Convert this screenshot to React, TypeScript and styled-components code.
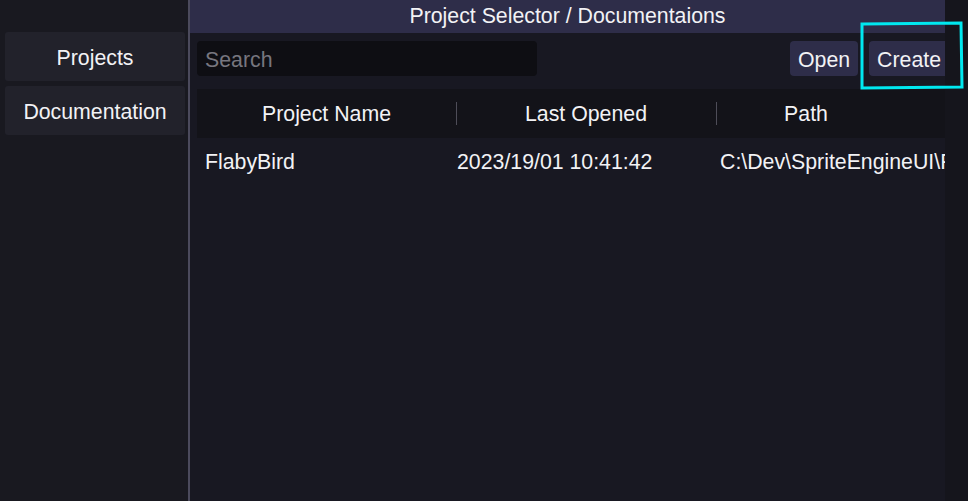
import styled, { createGlobalStyle } from 'styled-components';

const Global = createGlobalStyle`
  html, body {
    margin: 0;
    padding: 0;
    background: #15151c;
  }
  body {
    font-family: "Liberation Sans", Arial, sans-serif;
    color: #f2f2f5;
  }
`;

const Shell = styled.div`
  position: relative;
  display: flex;
  width: 968px;
  height: 501px;
  overflow: hidden;
  background: #15151c;
`;

const Sidebar = styled.nav`
  width: 190px;
  flex-shrink: 0;
  box-sizing: border-box;
  padding: 32px 0 0 5px;
  display: flex;
  flex-direction: column;
  gap: 5px;
  background: #191920;
  border-right: 2px solid #4b4a5c;
`;

const NavButton = styled.button`
  height: 49px;
  width: 180px;
  padding: 3px 0 0;
  border: none;
  border-radius: 3px;
  background: #22222b;
  color: #f2f2f5;
  font-family: inherit;
  font-size: 21.3px;
  cursor: pointer;
`;

const Panel = styled.main`
  width: 755px;
  flex-shrink: 0;
  display: flex;
  flex-direction: column;
  background: #181822;
  overflow: hidden;
`;

const TitleBar = styled.header`
  height: 33px;
  display: flex;
  align-items: center;
  justify-content: center;
  background: #2e2d49;
  font-size: 21.3px;
`;

const Body = styled.div`
  padding: 8px 0 0 7px;
  display: flex;
  flex-direction: column;
`;

const Toolbar = styled.div`
  height: 35px;
  display: flex;
  align-items: stretch;
  justify-content: space-between;
`;

const Search = styled.input`
  width: 340px;
  box-sizing: border-box;
  padding: 4px 8px 0;
  border: none;
  border-radius: 4px;
  background: #0e0e13;
  color: #f2f2f5;
  font-family: inherit;
  font-size: 21.3px;
  outline: none;

  &::placeholder {
    color: #77767f;
  }
`;

const Actions = styled.div`
  display: flex;
  gap: 11px;
  margin-right: -4px;
`;

const ActionButton = styled.button`
  padding: 4px 8px 0;
  border: none;
  border-radius: 4px;
  background: #2e2d49;
  color: #f2f2f5;
  font-family: inherit;
  font-size: 21.3px;
`;

const Table = styled.div`
  margin-top: 13px;
  display: flex;
  flex-direction: column;
`;

const Columns = '259px 260px 180px 1fr';

const HeadRow = styled.div`
  height: 49px;
  display: grid;
  grid-template-columns: ${Columns};
  background: #131319;
`;

const HeadCell = styled.div<{ $divider?: boolean }>`
  position: relative;
  display: flex;
  align-items: center;
  justify-content: center;
  padding-top: 2px;
  font-size: 21.3px;

  &::before {
    content: '';
    display: ${({ $divider }) => ($divider ? 'block' : 'none')};
    position: absolute;
    left: 0;
    top: 13px;
    height: 23px;
    width: 1px;
    background: #4e4d58;
  }
`;

const DataRow = styled.div`
  height: 46px;
  padding-top: 1px;
  display: grid;
  grid-template-columns: ${Columns};
`;

const DataCell = styled.div<{ $pad: number }>`
  display: flex;
  align-items: center;
  padding-left: ${({ $pad }) => $pad}px;
  font-size: 21.3px;
  white-space: nowrap;
`;

const Highlight = styled.svg`
  position: absolute;
  left: 857px;
  top: 19px;
  pointer-events: none;
`;

const projects = [
  {
    name: 'FlabyBird',
    opened: '2023/19/01 10:41:42',
    path: 'C:\\Dev\\SpriteEngineUI\\Projects\\FlabyBird',
  },
];

export default function App() {
  return (
    <>
      <Global />
      <Shell>
        <Sidebar>
          <NavButton>Projects</NavButton>
          <NavButton>Documentation</NavButton>
        </Sidebar>
        <Panel>
          <TitleBar>Project Selector / Documentaions</TitleBar>
          <Body>
            <Toolbar>
              <Search placeholder="Search" />
              <Actions>
                <ActionButton>Open</ActionButton>
                <ActionButton>Create</ActionButton>
              </Actions>
            </Toolbar>
            <Table>
              <HeadRow>
                <HeadCell>Project Name</HeadCell>
                <HeadCell $divider>Last Opened</HeadCell>
                <HeadCell $divider>Path</HeadCell>
                <HeadCell />
              </HeadRow>
              {projects.map((p) => (
                <DataRow key={p.name}>
                  <DataCell $pad={8}>{p.name}</DataCell>
                  <DataCell $pad={1}>{p.opened}</DataCell>
                  <DataCell $pad={4}>{p.path}</DataCell>
                </DataRow>
              ))}
            </Table>
          </Body>
        </Panel>
        <Highlight width="110" height="74" viewBox="0 0 110 74">
          <path
            d="M5 5 L104 4 L105 68 L5 69 Z"
            fill="none"
            stroke="#00e8f0"
            strokeWidth="3"
            strokeLinejoin="miter"
          />
        </Highlight>
      </Shell>
    </>
  );
}
